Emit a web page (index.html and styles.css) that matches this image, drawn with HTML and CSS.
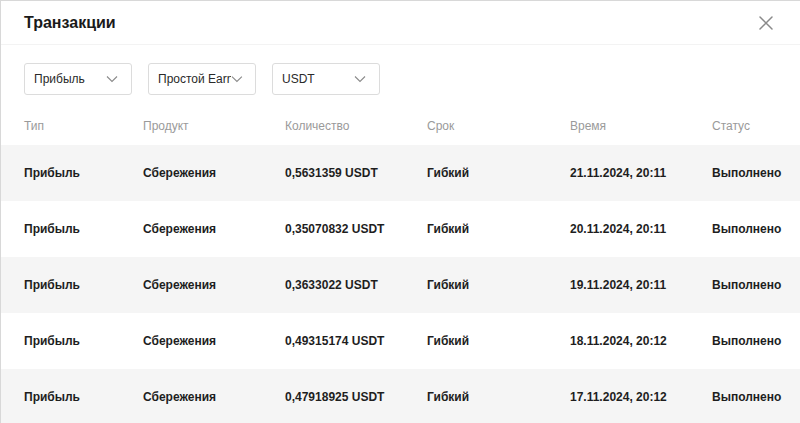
FILE: index.html
```html
<!DOCTYPE html>
<html lang="ru">
<head>
<meta charset="utf-8">
<title>Транзакции</title>
<link rel="stylesheet" href="styles.css">
</head>
<body>
<div class="modal">
  <header class="modal-head">
    <h1 class="title">Транзакции</h1>
    <button class="close" aria-label="Закрыть">
      <svg width="16" height="16" viewBox="0 0 16 16"><path d="M2 2L14 14M14 2L2 14" stroke="#8a8a8a" stroke-width="1.5" fill="none" stroke-linecap="round"/></svg>
    </button>
  </header>
  <div class="filters">
    <div class="select"><span class="select-text">Прибыль</span><svg class="chev" width="12" height="8" viewBox="0 0 12 8"><path d="M1 1.5L6 6.5L11 1.5" stroke="#8a8a8a" stroke-width="1.1" fill="none"/></svg></div>
    <div class="select tight"><span class="select-text">Простой Earn</span><svg class="chev" width="12" height="8" viewBox="0 0 12 8"><path d="M1 1.5L6 6.5L11 1.5" stroke="#8a8a8a" stroke-width="1.1" fill="none"/></svg></div>
    <div class="select"><span class="select-text">USDT</span><svg class="chev" width="12" height="8" viewBox="0 0 12 8"><path d="M1 1.5L6 6.5L11 1.5" stroke="#8a8a8a" stroke-width="1.1" fill="none"/></svg></div>
  </div>
  <div class="table">
    <div class="row head">
      <span>Тип</span><span>Продукт</span><span>Количество</span><span>Срок</span><span>Время</span><span>Статус</span>
    </div>
    <div class="row alt">
      <span>Прибыль</span><span>Сбережения</span><span>0,5631359 USDT</span><span>Гибкий</span><span>21.11.2024, 20:11</span><span>Выполнено</span>
    </div>
    <div class="row">
      <span>Прибыль</span><span>Сбережения</span><span>0,35070832 USDT</span><span>Гибкий</span><span>20.11.2024, 20:11</span><span>Выполнено</span>
    </div>
    <div class="row alt">
      <span>Прибыль</span><span>Сбережения</span><span>0,3633022 USDT</span><span>Гибкий</span><span>19.11.2024, 20:11</span><span>Выполнено</span>
    </div>
    <div class="row">
      <span>Прибыль</span><span>Сбережения</span><span>0,49315174 USDT</span><span>Гибкий</span><span>18.11.2024, 20:12</span><span>Выполнено</span>
    </div>
    <div class="row alt">
      <span>Прибыль</span><span>Сбережения</span><span>0,47918925 USDT</span><span>Гибкий</span><span>17.11.2024, 20:12</span><span>Выполнено</span>
    </div>
  </div>
</div>
</body>
</html>
```
FILE: styles.css
```css
* { box-sizing: border-box; }
html, body { margin: 0; padding: 0; background: #fff; }
body {
  font-family: "Liberation Sans", Arial, sans-serif;
  color: #1e1e1e;
  overflow: hidden;
}
.modal {
  width: 800px;
  height: 423px;
  border-top: 1px solid #d8d8d8;
  border-left: 1px solid #d8d8d8;
  background: #fff;
  overflow: hidden;
}
.modal-head {
  height: 44px;
  display: flex;
  align-items: center;
  justify-content: space-between;
  padding: 0 26px 0 23px;
  border-bottom: 1px solid #f3f3f3;
}
.title {
  margin: 0;
  font-size: 16px;
  font-weight: 700;
  color: #1a1a1a;
}
.close {
  border: 0;
  background: none;
  padding: 0;
  width: 16px;
  height: 16px;
  display: flex;
}
.filters {
  display: flex;
  align-items: flex-start;
  gap: 16px;
  padding: 18px 23px 0;
  height: 62px;
}
.select {
  width: 108px;
  height: 32px;
  border: 1px solid #dcdcdc;
  border-radius: 3px;
  display: flex;
  align-items: center;
  justify-content: space-between;
  padding: 0 13px 0 9px;
  font-size: 12px;
  color: #2a2a2a;
}
.select.tight { padding-right: 12px; justify-content: flex-start; }
.select.tight .select-text { width: 74px; overflow: hidden; white-space: nowrap; }
.table { display: flex; flex-direction: column; }
.row {
  display: grid;
  grid-template-columns: 119px 142px 142px 143px 142px 1fr;
  align-items: center;
  height: 56px;
  padding-left: 23px;
  font-size: 12px;
  font-weight: 700;
  color: #1e1e1e;
}
.row.head {
  height: 38px;
  font-weight: 400;
  color: #9a9a9a;
  align-items: start;
  padding-top: 12px;
}
.row.alt { background: #f5f5f5; }
```
